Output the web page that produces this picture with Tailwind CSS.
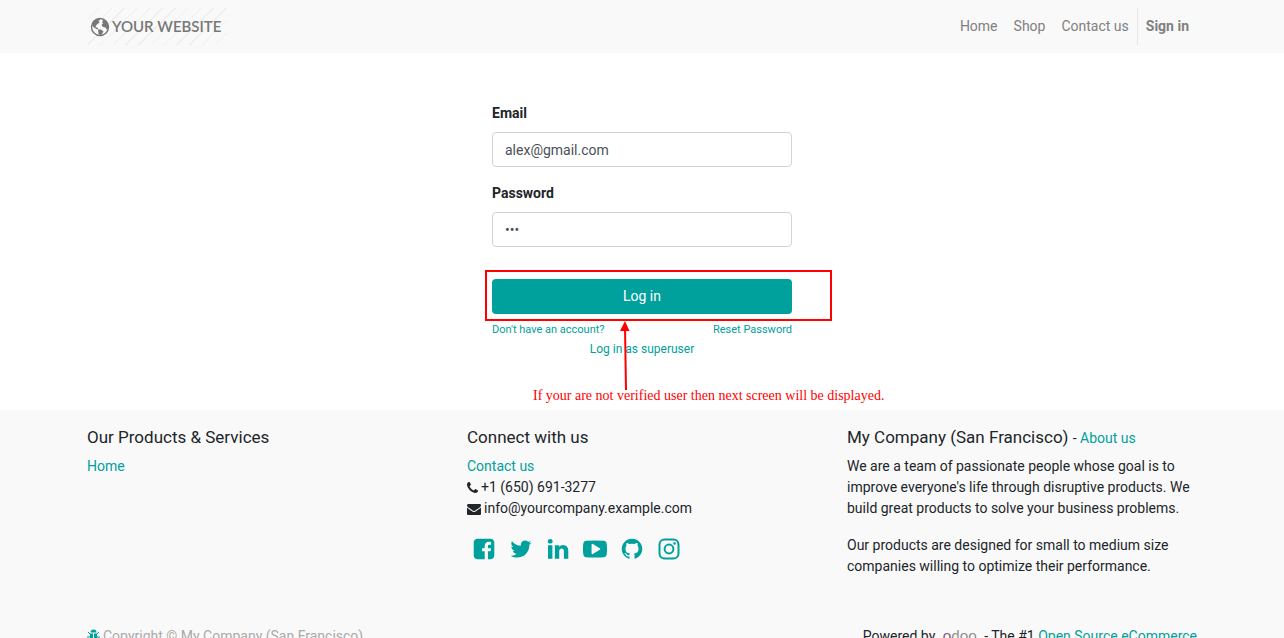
<!DOCTYPE html>
<html lang="en">
<head>
  <meta charset="UTF-8">
  <meta name="viewport" content="width=device-width, initial-scale=1.0">
  <title>Login | My Website</title>
  <script src="https://cdn.jsdelivr.net/npm/@tailwindcss/browser@4"></script>
</head>
<body class="h-screen overflow-hidden bg-white font-['Roboto',sans-serif] text-[14px] leading-[21px] text-[#212529]">

  <!-- Header -->
  <header class="bg-[#f9f9f9]">
    <div class="max-w-[1140px] mx-auto px-[15px] py-2 flex items-center justify-between">
      <a href="#" class="flex items-center h-[37px] w-[140px] pl-[3px] text-[#777] font-['Lato',sans-serif] text-[15px] font-semibold bg-[repeating-linear-gradient(135deg,transparent_0px,transparent_8px,#eeeeee_8px,#eeeeee_9px)]">
        <svg class="w-[20px] h-[20px] shrink-0 mr-[2px]" viewBox="0 0 20 20" fill="currentColor" aria-hidden="true">
          <circle cx="10" cy="10" r="8.5" fill="#f9f9f9" stroke="currentColor" stroke-width="1.4"/>
          <path d="M2.500 6L5 3L9 1.500L10.500 3L8.500 3.500L9.500 5.500L7.500 7L6 8.500L5.500 10L8 11L8 12.500L6.500 12L4 10.500L2 8.500Z"/>
          <path d="M12 2L16 4L18.500 8L18.500 11L17 13L15.500 10.500L13 10L11.500 8L13 6.500L12 5L13 4Z"/>
          <path d="M8 12.500L11 12.500L13.500 14.500L12 17L10 18.500L8.500 16.500Z"/>
        </svg>
        <span class="whitespace-nowrap">YOUR WEBSITE</span>
      </a>
      <nav class="flex items-center text-[#808080]">
        <a href="#" class="px-2">Home</a>
        <a href="#" class="px-2">Shop</a>
        <a href="#" class="px-2">Contact us</a>
        <a href="#" class="px-2 py-2 border-l border-[#e6e6e6] font-bold">Sign in</a>
      </nav>
    </div>
  </header>

  <!-- Login form -->
  <main class="pt-[50px] pb-[51px]">
    <form class="w-[300px] mx-auto">
      <label for="login" class="block mb-2 font-bold">Email</label>
      <input id="login" type="text" value="alex@gmail.com" class="block w-full h-[35px] px-3 mb-4 border border-[#ced4da] rounded-[4px] bg-white text-[#495057]">
      <label for="password" class="block mb-2 font-bold">Password</label>
      <input id="password" type="password" value="abc" class="block w-full h-[35px] px-3 mb-8 border border-[#ced4da] rounded-[4px] bg-white text-[#495057]">
      <div class="relative">
        <button type="button" class="block w-full h-[35px] rounded-[4px] bg-[#00a09d] text-white">Log in</button>
        <!-- Callout -->
        <div class="absolute -left-[7px] -top-[9px] w-[347px] h-[51px] border-2 border-[#f00] pointer-events-none"></div>
        <svg class="absolute left-[128px] top-[42px] w-[12px] h-[69px] pointer-events-none" viewBox="0 0 12 69" aria-hidden="true">
          <path d="M5 6L6 69" stroke="#f00" stroke-width="2"/>
          <path d="M5 0L9.500 10H0Z" fill="#f00"/>
        </svg>
        <p class="absolute left-[41px] top-[106px] whitespace-nowrap font-['Liberation_Serif',serif] text-[14px] text-[#f00]">If your are not verified user then next screen will be displayed.</p>
      </div>
      <div class="flex justify-between mt-2 text-[11px] leading-4 text-[#00a09d]">
        <a href="#">Don't have an account?</a>
        <a href="#">Reset Password</a>
      </div>
      <div class="mt-[2px] text-center text-[12px] leading-[19px]">
        <a href="#" class="text-[#00a09d]">Log in as superuser</a>
      </div>
    </form>
  </main>

  <!-- Footer -->
  <footer class="bg-[#f9f9f9] pt-4 pb-8">
    <div class="max-w-[1140px] mx-auto grid grid-cols-3">
      <div class="px-[15px]">
        <h2 class="mb-2 text-[17px] leading-[22px]">Our Products &amp; Services</h2>
        <a href="#" class="text-[#00a09d]">Home</a>
      </div>
      <div class="px-[15px]">
        <h2 class="mb-2 text-[17px] leading-[22px]">Connect with us</h2>
        <ul>
          <li><a href="#" class="text-[#00a09d]">Contact us</a></li>
          <li class="flex items-center gap-[3px]">
            <svg class="w-[11px] h-[14px]" viewBox="192 128 1408 1536" fill="currentColor" aria-hidden="true"><path d="M1600 1240q0 27-10 70.500t-21 68.500q-21 50-122 106-94 51-186 51-27 0-53-3.500t-57.500-12.500-47-14.500-55.500-20.500-49-18q-98-35-175-83-127-79-264-216t-216-264q-48-77-83-175-3-9-18-49t-20.500-55.500-14.500-47-12.500-57.500-3.500-53q0-92 51-186 56-101 106-122 25-11 68.500-21t70.500-10q14 0 21 3 18 6 53 76 11 19 30 54t35 63.500 31 53.500q3 4 17.500 25t21.500 35.500 7 28.500q0 20-28.500 50t-62 55-62 53-28.500 46q0 9 5 22.500t8.500 20.500 14 24 11.500 19q76 137 174 235t235 174q2 1 19 11.500t24 14 20.500 8.500 22.500 5q18 0 46-28.500t53-62 55-62 50-28.500q14 0 28.500 7t35.500 21.500 25 17.500q25 15 53.500 31t63.500 35 54 30q70 35 76 53 3 7 3 21z"/></svg>
            <span>+1 (650) 691-3277</span>
          </li>
          <li class="flex items-center gap-[3px]">
            <svg class="w-[14px] h-[14px]" viewBox="0 0 1792 1792" fill="currentColor" aria-hidden="true"><path d="M1792 710v794q0 66-47 113t-113 47h-1472q-66 0-113-47t-47-113v-794q44 49 101 87 362 246 497 345 57 42 92.500 65.500t94.500 48 110 24.500h2q51 0 110-24.500t94.500-48 92.500-65.500q170-123 498-345 57-39 100-87zm0-294q0 79-49 151t-122 123q-376 261-468 325-10 7-42.500 31t-54 38.500-52 32.500-57.500 27-50 9h-2q-23 0-50-9t-57.500-27-52-32.500-54-38.500-42.500-31q-91-64-262-182.500t-205-142.500q-62-42-117-115.500t-55-136.500q0-78 41.500-130t118.500-52h1472q65 0 112.500 47t47.500 113z"/></svg>
            <span>info@yourcompany.example.com</span>
          </li>
        </ul>
        <div class="flex gap-[13px] mt-[18px] ml-[5px] text-[#00a09d]">
          <a href="#" aria-label="Facebook"><svg class="w-6 h-6" viewBox="0 0 1792 1792" fill="currentColor"><path d="M1376 128q119 0 203.500 84.500t84.500 203.500v960q0 119-84.500 203.500t-203.500 84.500h-188v-595h199l30-232h-229v-148q0-56 23.500-84t91.500-28l122-1v-207q-63-9-178-9-136 0-217.500 80t-81.500 226v171h-200v232h200v595h-532q-119 0-203.500-84.500t-84.500-203.500v-960q0-119 84.500-203.500t203.500-84.500h960z"/></svg></a>
          <a href="#" aria-label="Twitter"><svg class="w-6 h-6" viewBox="0 0 1792 1792" fill="currentColor"><path d="M1684 408q-67 98-162 167 1 14 1 42 0 130-38 259.500t-115.500 248.500-184.500 210.500-258 146-323 54.500q-271 0-496-145 35 4 78 4 225 0 401-138-105-2-188-64.500t-114-159.500q33 5 61 5 43 0 85-11-112-23-185.500-111.500t-73.500-205.500v-4q68 38 146 41-66-44-105-115t-39-154q0-88 44-163 121 149 294.500 238.500t371.500 99.500q-8-38-8-74 0-134 94.500-228.500t228.500-94.500q140 0 236 102 109-21 205-78-37 115-142 178 93-10 186-50z"/></svg></a>
          <a href="#" aria-label="LinkedIn"><svg class="w-6 h-6" viewBox="0 0 1792 1792" fill="currentColor"><path d="M477 625v991h-330v-991h330zm21-306q1 73-50.500 122t-135.500 49h-2q-82 0-132-49t-50-122q0-74 51.500-122.500t134.500-48.500 133 48.500 51 122.500zm1166 729v568h-329v-530q0-105-40.500-164.500t-126.500-59.500q-63 0-105.500 34.500t-63.500 85.500q-11 30-11 81v553h-329q2-399 2-647t-1-296l-1-48h329v144h-2q20-32 41-56t56.500-52 87-43.500 114.500-15.500q171 0 275 113.500t104 332.500z"/></svg></a>
          <a href="#" aria-label="YouTube"><svg class="w-6 h-6" viewBox="0 0 1792 1792" fill="currentColor"><path d="M1280 896q0-37-30-54l-512-320q-31-20-65-2-33 18-33 56v640q0 38 33 56 16 8 31 8 20 0 34-10l512-320q30-17 30-54zm512 0q0 96-1 150t-8.500 136.500-22.500 147.500q-16 73-69 123t-124 58q-222 25-671 25t-671-25q-71-8-124.500-58t-69.500-123q-14-65-21.500-147.500t-8.500-136.500-1-150 1-150 8.500-136.500 22.500-147.500q16-73 69-123t124-58q222-25 671-25t671 25q71 8 124.500 58t69.500 123q14 65 21.500 147.500t8.500 136.500 1 150z"/></svg></a>
          <a href="#" aria-label="GitHub"><svg class="w-6 h-6" viewBox="0 0 1792 1792" fill="currentColor"><path d="M896 128q209 0 385.500 103t279.500 279.500 103 385.500q0 251-146.500 451.500t-378.500 277.500q-27 5-40-7t-13-30q0-3 .5-76.500t.5-134.500q0-97-52-142 57-6 102.500-18t94-39 81-66.500 53-105 20.500-150.500q0-119-79-206 37-91-8-204-28-9-81 11t-92 44l-38 24q-93-26-192-26t-192 26q-16-11-42.500-27t-83.500-38.500-85-13.500q-45 113-8 204-79 87-79 206 0 85 20.500 150t52.500 105 80.500 67 94 39 102.500 18q-39 36-49 103-21 10-45 15t-57 5-65.500-21.500-55.500-62.500q-19-32-48.500-52t-49.500-24l-20-3q-21 0-29 4.500t-5 11.500 9 14 13 12l7 5q22 10 43.500 38t31.500 51l10 23q13 38 44 61.500t67 30 69.500 7 55.500-3.500l23-4q0 38 .5 88.500t.5 54.500q0 18-13 30t-40 7q-232-77-378.500-277.500t-146.500-451.500q0-209 103-385.500t279.500-279.500 385.500-103z"/></svg></a>
          <a href="#" aria-label="Instagram"><svg class="w-6 h-6" viewBox="0 0 24 24" fill="none" stroke="currentColor" stroke-width="2"><rect x="2.500" y="2.500" width="19" height="19" rx="5"/><circle cx="12" cy="12" r="4.400"/><circle cx="17.500" cy="6.500" r="1.300" fill="currentColor" stroke="none"/></svg></a>
        </div>
      </div>
      <div class="px-[15px]">
        <h2 class="mb-2 text-[17px] leading-[22px]">My Company (San Francisco) <small class="text-[14px] leading-none">- <a href="#" class="text-[#00a09d]">About us</a></small></h2>
        <p class="mb-4">We are a team of passionate people whose goal is to improve everyone's life through disruptive products. We build great products to solve your business problems.</p>
        <p>Our products are designed for small to medium size companies willing to optimize their performance.</p>
      </div>
    </div>

    <!-- Copyright bar -->
    <div class="max-w-[1140px] mx-auto px-[15px] mt-12 flex justify-between">
      <div class="flex items-center gap-[3px] text-[#aaa]">
        <svg class="w-[13px] h-[14px] text-[#00a09d]" viewBox="0 0 13 14" fill="none" stroke="currentColor" aria-hidden="true">
          <path d="M3.500 3.500a3 3 0 0 1 6 0z" fill="currentColor" stroke="none"/>
          <path d="M3 4.500H6V13C4 13 3 11.500 3 9zM7 4.500H10V9C10 11.500 9 13 7 13z" fill="currentColor" stroke="none"/>
          <path d="M1 3L3.500 5.500M12 3L9.500 5.500M0 8H3M10 8H13M1.500 13L4 10.500M11.500 13L9 10.500"/>
        </svg>
        <span>Copyright © My Company (San Francisco)</span>
      </div>
      <div>
        Powered by
        <a href="#" class="px-1 font-['Lato',sans-serif] text-[15px] text-[#8f8f8f]"><span class="text-[#875a7b]">o</span>doo</a>
        - The #1 <a href="#" class="text-[#00a09d]">Open Source eCommerce</a>
      </div>
    </div>
  </footer>

</body>
</html>
